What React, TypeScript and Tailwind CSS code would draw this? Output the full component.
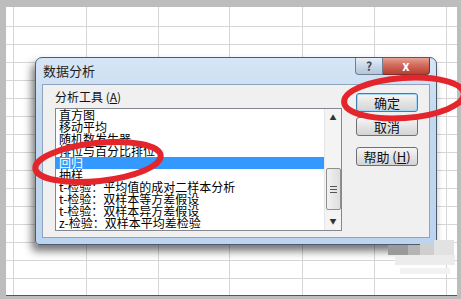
import React from "react";

const items = [
  "直方图",
  "移动平均",
  "随机数发生器",
  "排位与百分比排位",
  "回归",
  "抽样",
  "t-检验：平均值的成对二样本分析",
  "t-检验：双样本等方差假设",
  "t-检验：双样本异方差假设",
  "z-检验：双样本平均差检验",
];

const cols = [7, 80, 152, 223, 296, 368, 440];
const rows = [19, 37, 55, 73, 91, 109, 127, 145, 163, 181, 199, 217, 235, 253, 271];

const DlgButton = ({ label, focus }: { label: React.ReactNode; focus?: boolean }) => (
  <div
    className={
      "w-[62px] h-[19px] rounded-[3px] flex items-center justify-center text-[13px] leading-none text-[#111] bg-[linear-gradient(#f6f6f6,#e4e4e4_50%,#d4d4d4)] " +
      (focus
        ? "border border-[#3c7fb1] shadow-[inset_0_0_0_1px_#a7d7f5]"
        : "border border-[#707070]")
    }
  >
    {label}
  </div>
);

const App = () => {
  return (
    <div
      className="relative w-[461px] h-[299px] bg-[#bdbdbd] pt-[7px] pl-[6px] pr-[4px] pb-[3px] overflow-hidden"
      style={{ fontFamily: '"Noto Sans CJK SC", "Noto Sans", sans-serif' }}
    >
      {/* spreadsheet */}
      <div className="relative w-full h-[289px] bg-white border-b border-[#555]">
        <svg className="absolute inset-0" width="451" height="288">
          {cols.map((x) => (
            <line key={"c" + x} x1={x + 0.5} y1={0} x2={x + 0.5} y2={288} stroke="#d6d6d6" />
          ))}
          {rows.map((y) => (
            <line key={"r" + y} x1={0} y1={y + 0.5} x2={451} y2={y + 0.5} stroke="#d6d6d6" />
          ))}
        </svg>
      </div>

      {/* dialog */}
      <div className="absolute left-[35px] top-[57px] w-[402px] h-[188px] rounded-t-[7px] rounded-b-[4px] border border-[#4d5d70] bg-[linear-gradient(#d7e6f6,#c3d9f0_30%,#bcd4ee)] shadow-[-3px_6px_9px_rgba(0,0,0,0.55)] flex flex-col">
        <div className="h-[26px] flex items-start justify-between pl-[7px] pr-[6px]">
          <div className="pt-[5px] text-[13px] leading-[16px] text-[#1e1e1e]">数据分析</div>
          <div className="flex">
            <div className="w-[28px] h-[17px] rounded-bl-[4px] border border-t-0 border-[#6f7f90] bg-[linear-gradient(#e5eef8,#c9d8e8_50%,#b4c6da)] flex items-center justify-center text-[12px] font-bold text-[#3a4656]">
              ?
            </div>
            <div className="w-[47px] h-[17px] rounded-br-[4px] border border-t-0 border-l-0 border-[#7a3030] bg-[linear-gradient(#e8a093,#d16b5c_45%,#b8402f)] flex items-center justify-center text-[13px] font-bold text-white">
              x
            </div>
          </div>
        </div>
        <div className="mx-[6px] h-[154px] border border-[#8fa4ba] bg-[#f0f0f0] flex">
          <div className="pl-[12px] pt-[5px] flex flex-col">
            <div className="h-[17px] text-[12px] leading-[14px] text-[#111]">
              分析工具 (<span className="underline">A</span>)
            </div>
            <div className="mt-[1px] w-[287px] h-[123px] border border-[#828790] bg-white flex">
              <div className="flex-1 flex flex-col pt-[0px] text-[12px] leading-[12px] text-black overflow-hidden">
                {items.map((it, i) => (
                  <div
                    key={it}
                    className={
                      "h-[12px] pl-[3px] whitespace-nowrap " +
                      (i === 4 ? "bg-[#3399ff] text-white" : "")
                    }
                  >
                    {it}
                  </div>
                ))}
              </div>
              <div className="w-[17px] bg-[#f4f4f4] border-l border-[#e6e6e6] flex flex-col items-center">
                <div className="h-[17px] flex items-center justify-center text-[7px] text-[#333]">▲</div>
                <div className="mt-[42px] w-[15px] h-[42px] rounded-[2px] border border-[#8e8f8f] bg-[linear-gradient(90deg,#f2f2f2,#dedede)] flex flex-col items-center justify-center gap-[2px]">
                  <div className="w-[7px] h-px bg-[#555]" />
                  <div className="w-[7px] h-px bg-[#555]" />
                  <div className="w-[7px] h-px bg-[#555]" />
                </div>
                <div className="mt-auto h-[17px] flex items-center justify-center text-[7px] text-[#333]">▼</div>
              </div>
            </div>
          </div>
          <div className="ml-[14px] pt-[8px] flex flex-col">
            <DlgButton label="确定" focus />
            <div className="mt-[5px]">
              <DlgButton label="取消" />
            </div>
            <div className="mt-[11px]">
              <DlgButton
                label={
                  <span>
                    帮助 (<span className="underline">H</span>)
                  </span>
                }
              />
            </div>
          </div>
        </div>
      </div>

      {/* annotations + watermark */}
      <svg className="absolute inset-0 pointer-events-none" width="461" height="299">
        <rect x="388" y="245" width="20" height="10" fill="#9a9a9a" />
        <rect x="408" y="245" width="12" height="12" fill="#b5b5b5" />
        <rect x="420" y="243" width="14" height="14" fill="#cfcfcf" />
        <rect x="434" y="240" width="20" height="16" fill="#e2e2e2" />
        <rect x="395" y="255" width="60" height="10" fill="#ececec" />
        <rect x="400" y="268" width="50" height="6" fill="#f2f2f2" />
        <ellipse
          cx="404"
          cy="98"
          rx="60"
          ry="20"
          fill="none"
          stroke="#e4252b"
          strokeWidth="6"
          transform="rotate(-4 404 98)"
        />
        <ellipse
          cx="98"
          cy="162"
          rx="63"
          ry="19"
          fill="none"
          stroke="#e4252b"
          strokeWidth="6"
          transform="rotate(-6 98 162)"
        />
      </svg>
    </div>
  );
};

export default App;
